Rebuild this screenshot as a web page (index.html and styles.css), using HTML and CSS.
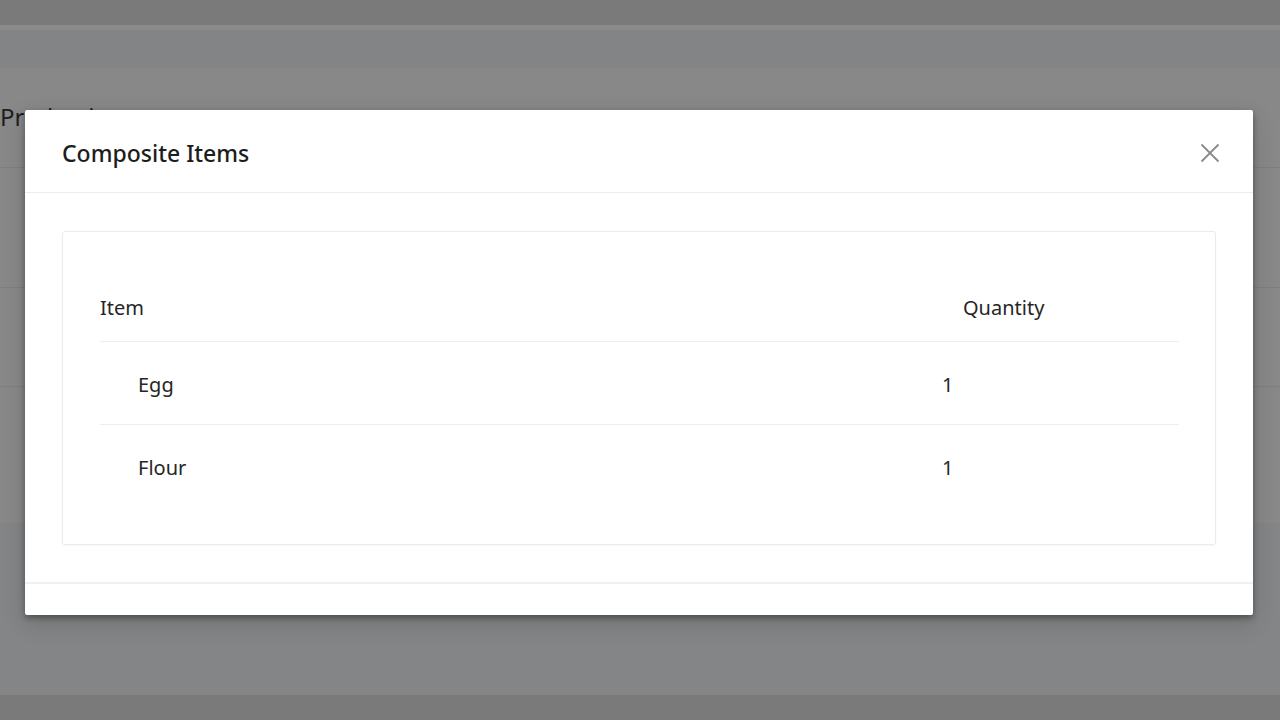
FILE: index.html
```html
<!DOCTYPE html>
<html>
<head>
<meta charset="utf-8">
<link rel="stylesheet" href="styles.css">
</head>
<body>
<div class="page">
  <div class="topbar"></div>
  <div class="topline"></div>
  <div class="navbar"></div>
  <div class="content">
    <div class="content-title">Production</div>
    <div class="content-row"></div>
    <div class="content-row"></div>
    <div class="content-row last"></div>
  </div>
  <div class="spacer"></div>
  <div class="bottombar"></div>
</div>

<div class="modal">
  <div class="modal-header">
    <h2 class="modal-title">Composite Items</h2>
    <button class="close" aria-label="Close">
      <svg width="20" height="20" viewBox="0 0 20 20"><path d="M1.5 1.5 L18.5 18.5 M18.5 1.5 L1.5 18.5" stroke="#8a8a8a" stroke-width="1.8" fill="none"/></svg>
    </button>
  </div>
  <div class="modal-body">
    <div class="card">
      <div class="table">
        <div class="tr head">
          <div class="th item">Item</div>
          <div class="th qty">Quantity</div>
        </div>
        <div class="tr">
          <div class="td item">Egg</div>
          <div class="td qty">1</div>
        </div>
        <div class="tr">
          <div class="td item">Flour</div>
          <div class="td qty">1</div>
        </div>
      </div>
    </div>
  </div>
  <div class="modal-footer"></div>
</div>
</body>
</html>
```

FILE: styles.css
```css
* { box-sizing: border-box; }
html, body {
  margin: 0;
  padding: 0;
  width: 1280px;
  height: 720px;
  overflow: hidden;
  font-family: "Noto Sans", "Open Sans", sans-serif;
  background: #848586;
}
.page {
  display: flex;
  flex-direction: column;
  height: 720px;
}
.topbar { height: 25px; background: #7a7a7a; }
.topline { height: 5px; background: #8a8a8a; }
.navbar { height: 38px; background: #838485; }
.content {
  height: 455px;
  background: #888888;
  display: flex;
  flex-direction: column;
}
.content-title {
  height: 100px;
  padding-top: 34px;
  padding-left: 0;
  font-size: 24px;
  color: #1e1e1e;
  line-height: 30px;
  border-bottom: 1px solid #7f7f7f;
}
.content-row {
  height: 120px;
  border-bottom: 1px solid #7f7f7f;
}
.content-row:nth-child(3) { height: 99px; }
.content-row.last { border-bottom: none; flex: 1; }
.spacer { flex: 1; background: #848586; }
.bottombar { height: 25px; background: #7a7a7a; }

.modal {
  position: absolute;
  left: 25px;
  top: 110px;
  width: 1228px;
  height: 505px;
  background: #fff;
  border-radius: 2px;
  box-shadow: 0 3px 6px rgba(0,0,0,0.35), 0 8px 24px rgba(0,0,0,0.15);
  display: flex;
  flex-direction: column;
}
.modal-header {
  height: 84px;
  display: flex;
  align-items: center;
  justify-content: space-between;
  padding: 4px 33px 0 37px;
  border-bottom: 1px solid #ececec;
}
.modal-title {
  margin: 0;
  font-size: 23px;
  font-weight: 500;
  color: #1d1d1d;
  letter-spacing: 0;
}
.close {
  background: none;
  border: none;
  padding: 0;
  width: 20px;
  height: 20px;
  cursor: pointer;
  display: flex;
}
.modal-body {
  flex: 1;
  padding: 38px 37px 37px 37px;
  border-bottom: 2px solid #f0f0f0;
}
.card {
  border: 1px solid #ebebeb;
  border-radius: 3px;
  box-shadow: 0 1px 2px rgba(0,0,0,0.04);
  padding: 36px 36px 37px 37px;
  height: 314px;
}
.table {
  display: flex;
  flex-direction: column;
}
.tr {
  display: grid;
  grid-template-columns: 842px 1fr;
  height: 83px;
  align-items: center;
  border-top: 1px solid #eeeeee;
  font-size: 20px;
  color: #262626;
  padding-top: 2px;
}
.tr.head {
  height: 73px;
  border-top: none;
  padding-top: 5px;
}
.th.qty { padding-left: 21px; }
.td.item { padding-left: 38px; }
.td.qty { padding-left: -1px; }
.modal-footer { height: 31px; }
```
